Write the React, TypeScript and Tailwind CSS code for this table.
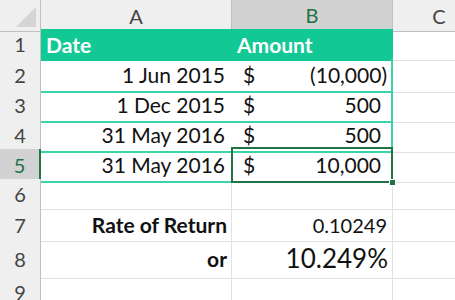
import React from 'react';

const font = { fontFamily: 'Lato, "Open Sans", sans-serif' };

const rows = [
  { n: 1, h: 'h-[30px]' },
  { n: 2, h: 'h-[30px]' },
  { n: 3, h: 'h-[30px]' },
  { n: 4, h: 'h-[30px]' },
  { n: 5, h: 'h-[30px]' },
  { n: 6, h: 'h-[30px]' },
  { n: 7, h: 'h-[30px]' },
  { n: 8, h: 'h-[38px]' },
  { n: 9, h: 'h-[30px]' },
];

const data = [
  { date: '1 Jun 2015', amount: '(10,000)' },
  { date: '1 Dec 2015', amount: '500' },
  { date: '31 May 2016', amount: '500' },
  { date: '31 May 2016', amount: '10,000' },
];

const App: React.FC = () => {
  return (
    <div className="w-[455px] h-[300px] overflow-hidden bg-white text-[#111]" style={font}>
      {/* Column headers */}
      <div className="grid grid-cols-[41px_191px_161px_62px] h-[29px]">
        <div className="relative bg-[#efefef] border-r border-b border-[#bfbfbf]">
          <div className="absolute right-[4px] bottom-[4px] w-0 h-0 border-l-[20px] border-l-transparent border-b-[20px] border-b-[#d5d5d5]" />
        </div>
        <div className="bg-[#efefef] border-r border-b border-[#bfbfbf] flex items-center justify-center text-[20px] text-[#444]">A</div>
        <div className="bg-[#d2d2d2] border-r border-[#bfbfbf] border-b-2 border-b-[#217346] flex items-center justify-center text-[20px] text-[#217346]">B</div>
        <div className="bg-[#efefef] border-b border-[#bfbfbf] flex items-center justify-center text-[20px] text-[#444] pl-[30px]">C</div>
      </div>

      {rows.map((r) => {
        const d = r.n >= 2 && r.n <= 5 ? data[r.n - 2] : null;
        const selected = r.n === 5;
        return (
          <div key={r.n} className={`grid grid-cols-[41px_191px_161px_62px] ${r.h}`}>
            <div
              className={`flex items-center justify-center text-[20px] border-b border-b-[#d6d6d6] ${
                selected
                  ? 'bg-[#d2d2d2] text-[#217346] border-r-2 border-r-[#217346]'
                  : 'bg-[#efefef] text-[#444] border-r border-r-[#bfbfbf]'
              }`}
            >
              {r.n}
            </div>

            {r.n === 1 && (
              <>
                <div className="bg-[#12c995] flex items-center pl-[5px] text-[21px] font-bold text-white">Date</div>
                <div className="bg-[#12c995] flex items-center pl-[5px] text-[21px] font-bold text-white">Amount</div>
              </>
            )}

            {d && (
              <>
                <div className="border-b-2 border-b-[#3ad4a8] flex items-center justify-end pr-[7px] text-[21px]">{d.date}</div>
                <div className="relative border-b-2 border-b-[#3ad4a8] border-r-2 border-r-[#3ad4a8] flex items-center justify-between pl-[11px] pr-[4px] text-[21px]">
                  <span>$</span>
                  <span className={d.amount.startsWith('(') ? '' : 'pr-[6px]'}>{d.amount}</span>
                  {selected && (
                    <>
                      <div className="absolute -left-px -top-[2px] -right-[2px] -bottom-[2px] border-2 border-[#217346]" />
                      <div className="absolute -right-[5px] -bottom-[5px] w-[7px] h-[7px] bg-[#217346] border border-white" />
                    </>
                  )}
                </div>
              </>
            )}

            {r.n === 6 && (
              <>
                <div className="border-b border-r border-[#e1e1e1]" />
                <div className="border-b border-r border-[#e1e1e1]" />
              </>
            )}

            {r.n === 7 && (
              <>
                <div className="border-b border-r border-[#e1e1e1] flex items-center justify-end pr-[4px] text-[21px] font-bold">Rate of Return</div>
                <div className="border-b border-r border-[#e1e1e1] flex items-center justify-end pr-[5px] text-[20px]">0.10249</div>
              </>
            )}

            {r.n === 8 && (
              <>
                <div className="border-b border-r border-[#e1e1e1] flex items-center justify-end pr-[4px] text-[21px] font-bold">or</div>
                <div className="border-b border-r border-[#e1e1e1] flex items-center justify-end pr-[4px] text-[26px]">10.249%</div>
              </>
            )}

            {r.n === 9 && (
              <>
                <div className="border-b border-r border-[#e1e1e1]" />
                <div className="border-b border-r border-[#e1e1e1]" />
              </>
            )}

            <div className="border-b border-[#e1e1e1]" />
          </div>
        );
      })}
    </div>
  );
};

export default App;
